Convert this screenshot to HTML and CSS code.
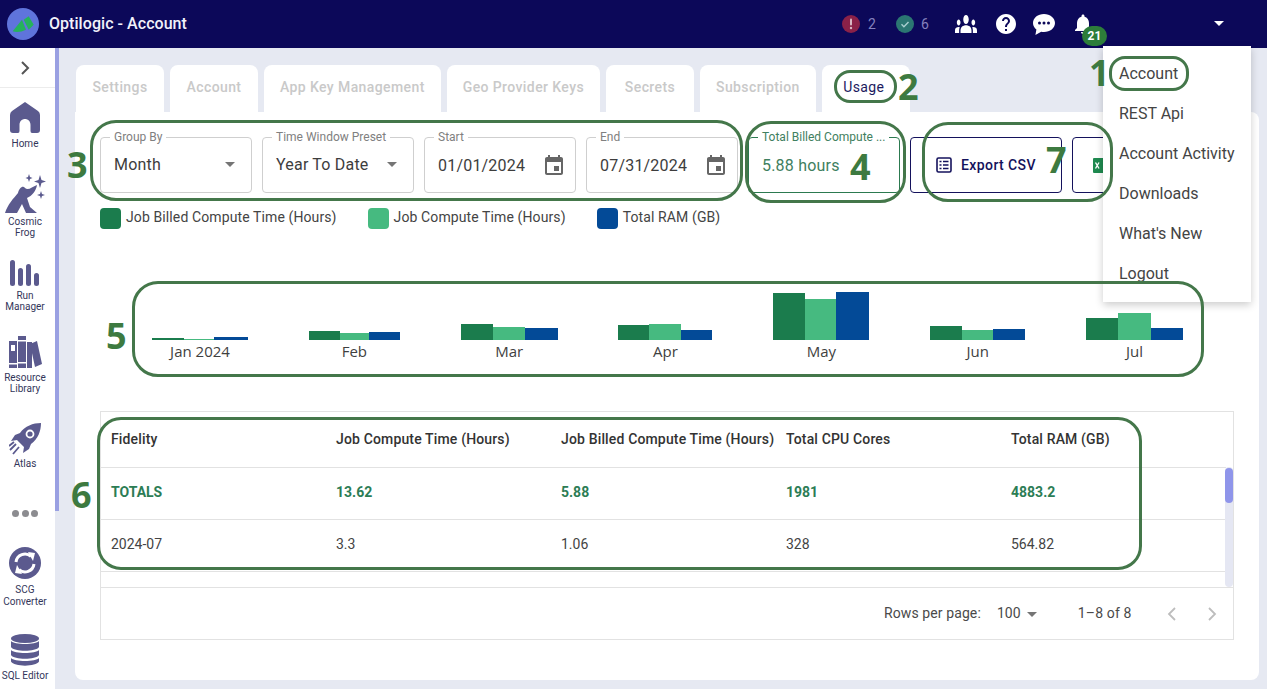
FILE: index.html
```html
<!DOCTYPE html>
<html lang="en">
<head>
<meta charset="utf-8">
<title>Optilogic - Account</title>
<link rel="stylesheet" href="styles.css">
</head>
<body>
<div class="app">
  <header class="topbar">
    <svg class="logo" viewBox="0 0 32 32"><circle cx="16" cy="16" r="16" fill="#5f74dc"/><path d="M5.700 23.300 L15 11.700 L19 21.700 Q12 25 5.700 23.300 Z" fill="#25b35c"/><path d="M16.700 11.700 L21.700 8.300 L26.700 16.700 L21.700 21.700 Z" fill="#25b35c"/></svg>
    <h1 class="title">Optilogic - Account</h1>
    <div class="top-icons">
      <span class="stat"><svg class="stat-icon" viewBox="0 0 18 18"><circle cx="9" cy="9" r="9" fill="#8a2148"/><rect x="8" y="3.5" width="2" height="7" rx="1" fill="#d8b8c4"/><circle cx="9" cy="13" r="1.2" fill="#d8b8c4"/></svg><span>2</span></span>
      <span class="stat stat-ok"><svg class="stat-icon" viewBox="0 0 18 18"><circle cx="9" cy="9" r="9" fill="#2b7672"/><path d="M5.5 9.3l2.4 2.4 4.6-4.8" fill="none" stroke="#a9cfd0" stroke-width="1.4"/></svg><span>6</span></span>
      <svg class="ti ti-people" viewBox="0 6 24 12" preserveAspectRatio="none"><path fill="#fff" d="M12 12.75c1.63 0 3.07.39 4.24.9 1.08.48 1.76 1.56 1.76 2.73V18H6v-1.61c0-1.18.68-2.26 1.76-2.73 1.17-.52 2.61-.91 4.24-.91zM4 13c1.1 0 2-.9 2-2s-.9-2-2-2-2 .9-2 2 .9 2 2 2zm1.13 1.1C4.76 14.04 4.39 14 4 14c-.99 0-1.93.21-2.78.58C.48 14.9 0 15.62 0 16.43V18h4.5v-1.61c0-.83.23-1.61.63-2.29zM20 13c1.1 0 2-.9 2-2s-.9-2-2-2-2 .9-2 2 .9 2 2 2zm4 3.43c0-.81-.48-1.53-1.22-1.85C21.93 14.21 20.99 14 20 14c-.39 0-.76.04-1.13.1.4.68.63 1.46.63 2.29V18H24v-1.57zM12 6c1.66 0 3 1.34 3 3s-1.34 3-3 3-3-1.34-3-3 1.34-3 3-3z"/></svg>
      <svg class="ti ti-help" viewBox="2 2 20 20"><path fill="#fff" d="M12 2C6.48 2 2 6.48 2 12s4.48 10 10 10 10-4.48 10-10S17.52 2 12 2zm1 17h-2v-2h2v2zm2.07-7.75l-.9.92C13.45 12.9 13 13.5 13 15h-2v-.5c0-1.1.45-2.1 1.17-2.83l1.24-1.26c.37-.36.59-.86.59-1.41 0-1.1-.9-2-2-2s-2 .9-2 2H8c0-2.21 1.79-4 4-4s4 1.79 4 4c0 .88-.36 1.68-.93 2.25z"/></svg>
      <svg class="ti ti-chat" viewBox="0 0 24 24"><path fill="#fff" d="M12 2C5.9 2 1 5.9 1 11c0 2.600 1.300 4.900 3.400 6.500L3.400 23l5.800-3.300c.9.2 1.800.3 2.800.3 6.100 0 11-4 11-9S18.100 2 12 2z"/><circle cx="7.500" cy="11" r="1.500" fill="#0c0859"/><circle cx="12" cy="11" r="1.500" fill="#0c0859"/><circle cx="16.500" cy="11" r="1.500" fill="#0c0859"/></svg>
      <span class="bell">
        <svg class="ti-bell" viewBox="0 0 24 24"><path fill="#fff" d="M12 22c1.100 0 2-.9 2-2h-4c0 1.100.89 2 2 2zm6-6v-5c0-3.070-1.640-5.640-4.500-6.320V4c0-.83-.67-1.500-1.500-1.500s-1.500.67-1.500 1.500v.68C7.630 5.360 6 7.920 6 11v5l-2 2v1h16v-1l-2-2z"/></svg>
        <span class="badge">21</span>
      </span>
    </div>
    <span class="top-caret"></span>
  </header>

  <div class="body">
    <nav class="sidebar">
      <div class="side-toggle"><svg class="chev" viewBox="0 0 10 16"><path d="M2 2l6 6-6 6" fill="none" stroke="#555" stroke-width="2"/></svg></div>
      <a class="side-item si-home">
        <svg class="i-home" viewBox="0 0 30 32"><path fill="#5b5a8e" d="M15 0 L28 9 Q30 10.500 30 13 V28 Q30 31 27 31 H22 Q20.500 31 20.500 29 V23 C20.500 15 9.500 15 9.500 23 V29 Q9.500 31 8 31 H3 Q0 31 0 28 V13 Q0 10.500 2 9 Z"/></svg>
        <span>Home</span>
      </a>
      <a class="side-item si-frog">
        <svg class="i-frog" viewBox="0 0 42 42"><path fill="#5b5a8e" d="M1 40 C4 31 9 26 14 20 C15 15 19 12 21 15 C24 18 28 14 33 12 C32 18 28 23 23 25 L26 34 L33 40 L22 40 L18 31 L13 40 Z"/><path fill="#5b5a8e" d="M36 2 L37.500 7 L42 8.500 L37.500 10 L36 15 L34.500 10 L30 8.500 L34.500 7 Z M25 1 L26 4 L28.500 5 L26 6 L25 9 L24 6 L21.500 5 L24 4 Z M37 18 L38 21 L41 22 L38 23 L37 26 L36 23 L33 22 L36 21 Z"/></svg>
        <span>Cosmic<br>Frog</span>
      </a>
      <a class="side-item si-run">
        <svg class="i-run" viewBox="0 0 29 26"><g fill="#5b5a8e"><rect x="0" y="0" width="5" height="26" rx="2.500"/><rect x="8" y="8" width="5" height="18" rx="2.500"/><rect x="16" y="4" width="5" height="22" rx="2.500"/><rect x="24" y="13" width="5" height="13" rx="2.500"/></g></svg>
        <span>Run<br>Manager</span>
      </a>
      <a class="side-item si-lib">
        <svg class="i-lib" viewBox="0 0 33 33"><g fill="#5b5a8e"><rect x="0" y="5" width="8" height="27"/><rect x="9" y="0" width="8" height="32"/><rect x="18" y="6" width="5" height="26"/><path d="M21 8 L28 5 L33 28 L26 31 Z"/></g><g fill="#fff"><rect x="2" y="9" width="4" height="6"/><rect x="9" y="4" width="8" height="1.500"/><rect x="9" y="26" width="8" height="1.500"/><rect x="0" y="27" width="8" height="1.500"/></g></svg>
        <span>Resource<br>Library</span>
      </a>
      <a class="side-item si-atlas">
        <svg class="i-atlas" viewBox="0 0 32 33"><path fill="#5b5a8e" d="M32 0 C24 0 16 3 11 10 L6 12 L2 18 L8 17 L15 24 L14 30 L20 26 L22 21 C29 16 32 8 32 0Z"/><circle cx="21" cy="11" r="3.500" fill="none" stroke="#fff" stroke-width="1.800"/><path d="M7 21 L1 27 M10 24 L4 31 M5 19 L0 23" stroke="#5b5a8e" stroke-width="1.800" fill="none"/></svg>
        <span>Atlas</span>
      </a>
      <div class="side-dots"><i></i><i></i><i></i></div>
      <a class="side-item si-scg">
        <svg class="i-scg" viewBox="0 0 32 32"><circle cx="16" cy="16" r="16" fill="#5b5a8e"/><path d="M7 15 A9 9 0 0 1 22 9.500" fill="none" stroke="#fff" stroke-width="3"/><path d="M19 5 L26 6 L24 14 Z" fill="#fff"/><path d="M25 17 A9 9 0 0 1 10 22.500" fill="none" stroke="#fff" stroke-width="3"/><path d="M13 27 L6 26 L8 18 Z" fill="#fff"/></svg>
        <span>SCG<br>Converter</span>
      </a>
      <a class="side-item si-sql">
        <svg class="i-sql" viewBox="0 0 28 32"><g fill="#5b5a8e"><ellipse cx="14" cy="4.500" rx="14" ry="4.500"/><path d="M0 7 C3 11 25 11 28 7 V13 C25 18 3 18 0 13 Z"/><path d="M0 16 C3 20 25 20 28 16 V21 C25 26 3 26 0 21 Z"/><path d="M0 24 C3 28 25 28 28 24 V27.500 C25 33 3 33 0 27.500 Z"/></g></svg>
        <span>SQL Editor</span>
      </a>
    </nav>
    <div class="strip"><div class="strip-thumb"></div></div>

    <main class="main">
      <div class="tabs">
        <a class="tab">Settings</a>
        <a class="tab">Account</a>
        <a class="tab">App Key Management</a>
        <a class="tab">Geo Provider Keys</a>
        <a class="tab">Secrets</a>
        <a class="tab">Subscription</a>
        <a class="tab tab-active">Usage</a>
      </div>
      <section class="card">
        <div class="controls">
          <div class="field"><label class="field-label">Group By</label><span class="field-value field-select">Month</span><span class="caret"></span></div>
          <div class="field"><label class="field-label">Time Window Preset</label><span class="field-value field-select">Year To Date</span><span class="caret"></span></div>
          <div class="field"><label class="field-label">Start</label><span class="field-value">01/01/2024</span><svg class="cal" viewBox="3 1 18 20"><path fill="#666" d="M17 12h-5v5h5v-5zM16 1v2H8V1H6v2H5c-1.110 0-1.990.9-1.990 2L3 19c0 1.100.89 2 2 2h14c1.100 0 2-.9 2-2V5c0-1.100-.9-2-2-2h-1V1h-2zm3 18H5V8h14v11z"/></svg></div>
          <div class="field"><label class="field-label">End</label><span class="field-value">07/31/2024</span><svg class="cal" viewBox="3 1 18 20"><path fill="#666" d="M17 12h-5v5h5v-5zM16 1v2H8V1H6v2H5c-1.110 0-1.990.9-1.990 2L3 19c0 1.100.89 2 2 2h14c1.100 0 2-.9 2-2V5c0-1.100-.9-2-2-2h-1V1h-2zm3 18H5V8h14v11z"/></svg></div>
          <div class="field field-green"><label class="field-label">Total Billed Compute ...</label><span class="field-value">5.88 hours</span></div>
          <button class="btn"><svg class="btn-icon" viewBox="0 0 16 16"><rect x="1" y="1" width="14" height="14" rx="1.500" fill="none" stroke="#14125c" stroke-width="1.600"/><path d="M3.500 4.500h2M7 4.500h5.500M3.500 8h2M7 8h5.500M3.500 11.500h2M7 11.500h5.500" stroke="#14125c" stroke-width="1.500"/></svg>Export CSV</button>
          <button class="btn btn-xl" aria-label="Export Excel"><svg class="xl-icon" viewBox="0 0 16 15"><rect x="0" y="0" width="16" height="15" rx="1" fill="#1f8a50"/><path d="M2.500 4.500l3.500 6M6 4.500l-3.500 6" stroke="#fff" stroke-width="1.400"/></svg></button>
        </div>
        <div class="legend">
          <span class="legend-item"><i class="sw sw-a"></i>Job Billed Compute Time (Hours)</span>
          <span class="legend-item"><i class="sw sw-b"></i>Job Compute Time (Hours)</span>
          <span class="legend-item"><i class="sw sw-c"></i>Total RAM (GB)</span>
        </div>
        <div class="chart">
          <div class="group"><div class="bars"><i class="bar sw-a" style="height:2px;width:32px"></i><i class="bar sw-b" style="height:1px;width:30px"></i><i class="bar sw-c" style="height:3px;width:34px"></i></div><span>Jan 2024</span></div>
          <div class="group"><div class="bars"><i class="bar sw-a" style="height:9px;width:31px"></i><i class="bar sw-b" style="height:7px;width:29px"></i><i class="bar sw-c" style="height:8px;width:31px"></i></div><span>Feb</span></div>
          <div class="group"><div class="bars"><i class="bar sw-a" style="height:16px;width:32px"></i><i class="bar sw-b" style="height:13px;width:32px"></i><i class="bar sw-c" style="height:12px;width:33px"></i></div><span>Mar</span></div>
          <div class="group"><div class="bars"><i class="bar sw-a" style="height:15px;width:31px"></i><i class="bar sw-b" style="height:16px;width:32px"></i><i class="bar sw-c" style="height:10px;width:31px"></i></div><span>Apr</span></div>
          <div class="group"><div class="bars"><i class="bar sw-a" style="height:47px;width:32px"></i><i class="bar sw-b" style="height:41px;width:31px"></i><i class="bar sw-c" style="height:48px;width:33px"></i></div><span>May</span></div>
          <div class="group"><div class="bars"><i class="bar sw-a" style="height:14px;width:32px"></i><i class="bar sw-b" style="height:10px;width:31px"></i><i class="bar sw-c" style="height:11px;width:32px"></i></div><span>Jun</span></div>
          <div class="group"><div class="bars"><i class="bar sw-a" style="height:22px;width:32px"></i><i class="bar sw-b" style="height:27px;width:33px"></i><i class="bar sw-c" style="height:12px;width:32px"></i></div><span>Jul</span></div>
        </div>
        <div class="table-box">
          <div class="table-scroll">
            <table class="data">
              <thead><tr><th>Fidelity</th><th>Job Compute Time (Hours)</th><th>Job Billed Compute Time (Hours)</th><th>Total CPU Cores</th><th>Total RAM (GB)</th></tr></thead>
              <tbody>
                <tr class="totals"><td>TOTALS</td><td>13.62</td><td>5.88</td><td>1981</td><td>4883.2</td></tr>
                <tr><td>2024-07</td><td>3.3</td><td>1.06</td><td>328</td><td>564.82</td></tr>
              </tbody>
            </table>
            <div class="vscroll"><div class="vthumb"></div></div>
          </div>
          <div class="pager">
            <span class="pager-label">Rows per page:</span>
            <span class="pager-size">100</span><span class="caret caret-pager"></span>
            <span class="pager-range">1–8 of 8</span>
            <svg class="pager-chev" viewBox="0 0 10 16"><path d="M8 2L2 8l6 6" fill="none" stroke="#bdbdbd" stroke-width="1.800"/></svg>
            <svg class="pager-chev pager-next" viewBox="0 0 10 16"><path d="M2 2l6 6-6 6" fill="none" stroke="#bdbdbd" stroke-width="1.800"/></svg>
          </div>
        </div>
      </section>
    </main>
  </div>

  <div class="menu">
    <a>Account</a><a>REST Api</a><a>Account Activity</a><a>Downloads</a><a>What's New</a><a>Logout</a>
  </div>

  <div class="ring r1"></div><div class="ring r2"></div><div class="ring r3"></div><div class="ring r4"></div>
  <div class="ring r5"></div><div class="ring r6"></div><div class="ring r7"></div>
  <span class="num n1">1</span><span class="num n2">2</span><span class="num n3">3</span><span class="num n4">4</span>
  <span class="num n5">5</span><span class="num n6">6</span><span class="num n7">7</span>
</div>
</body>
</html>
```
FILE: styles.css
```css
* { box-sizing: border-box; }
html, body { margin: 0; padding: 0; height: 100%; overflow: hidden; }
body { font-family: Roboto, "Liberation Sans", sans-serif; color: #3a3a3a; background: #e6e9f2; }
.app { position: relative; width: 1267px; height: 689px; overflow: hidden; display: flex; flex-direction: column; }

/* top bar */
.topbar { height: 48px; flex: none; background: #0c0859; display: flex; align-items: center; padding-left: 7px; color: #fff; }
.logo { width: 32px; height: 32px; flex: none; }
.title { font-size: 16px; font-weight: 500; margin: 0 0 2px 10px; letter-spacing: .05px; color: #f2f2fa; }
.top-icons { position: absolute; left: 842px; top: 0; height: 48px; display: flex; align-items: center; }
.stat { display: flex; align-items: center; gap: 8px; font-size: 14px; color: #8481bd; width: 54px; }
.stat-ok { width: 61px; gap: 7px; }
.stat-icon { width: 18px; height: 18px; }
.ti { display: block; }
.ti-people { width: 22px; height: 18px; margin-left: -2px; }
.ti-help { width: 20px; height: 20px; margin-left: 19px; }
.ti-chat { width: 24px; height: 24px; margin-left: 16px; }
.bell { position: relative; margin-left: 15px; width: 24px; height: 24px; }
.ti-bell { width: 24px; height: 24px; display: block; }
.badge { position: absolute; left: 11px; top: 14px; width: 25px; height: 20px; border-radius: 10px; background: #2d7d3a; color: #fff; font-size: 12px; font-weight: 700; line-height: 20px; text-align: center; }
.top-caret { position: absolute; left: 1214px; top: 21px; border-left: 5px solid transparent; border-right: 5px solid transparent; border-top: 5px solid #fff; }

/* body */
.body { flex: 1; display: flex; min-height: 0; }
.sidebar { width: 55px; flex: none; background: #fff; display: flex; flex-direction: column; align-items: center; overflow: hidden; padding-right: 5px; }
.side-toggle { width: 55px; margin-right: -5px; height: 40px; flex: none; border-bottom: 1px solid #ececec; display: flex; align-items: center; padding-left: 20px; }
.chev { width: 10px; height: 16px; }
.side-item { display: flex; flex-direction: column; align-items: center; flex: none; font-size: 10px; line-height: 11.5px; color: #33365a; text-align: center; white-space: nowrap; }
.side-item span { display: block; }
.si-home { margin-top: 14px; } .i-home { width: 30px; height: 32px; margin-bottom: 4px; }
.si-frog { margin-top: 23px; } .i-frog { width: 42px; height: 42px; margin-bottom: 1px; }
.si-run { margin-top: 21px; } .i-run { width: 29px; height: 26px; margin-bottom: 4px; }
.si-lib { margin-top: 23px; } .i-lib { width: 33px; height: 33px; margin-bottom: 3px; }
.si-atlas { margin-top: 28px; } .i-atlas { width: 32px; height: 33px; margin-bottom: 2px; }
.side-dots { margin-top: 41px; display: flex; gap: 2.500px; flex: none; }
.side-dots i { width: 7px; height: 7px; border-radius: 50%; background: #8c8c90; }
.si-scg { margin-top: 30px; } .i-scg { width: 32px; height: 32px; margin-bottom: 5px; }
.si-sql { margin-top: 27px; } .i-sql { width: 28px; height: 32px; margin-bottom: 4px; }
.strip { width: 4px; flex: none; background: #e6e9f2; }
.strip-thumb { height: 463px; background: #9aa0e2; }

/* main */
.main { flex: 1; min-width: 0; padding: 17px 8px 9px 16px; display: flex; flex-direction: column; }
.tabs { display: flex; gap: 6px; height: 47px; flex: none; padding-left: 1px; }
.tab { background: #fff; border-radius: 8px 8px 0 0; min-width: 88px; padding: 0 16px 4px; font-size: 14px; font-weight: 500; letter-spacing: .4px; color: #c9c9c9; display: flex; align-items: center; justify-content: center; white-space: nowrap; }
.tab-active { color: #1c1a5e; font-weight: 400; padding-right: 18px; padding-left: 14px; }
.card { flex: 1; background: #fff; border-radius: 0 8px 8px 8px; padding: 25px 25px 0; min-height: 0; }
.controls { display: flex; gap: 10px; height: 56px; }
.field { position: relative; width: 152px; height: 56px; border: 1px solid #cfcfcf; border-radius: 4px; display: flex; align-items: center; padding: 0 13px; flex: none; }
.field-label { position: absolute; left: 9px; top: -7px; background: #fff; padding: 0 4px; font-size: 12px; line-height: 13px; color: #808080; white-space: nowrap; }
.field-value { font-size: 16px; color: #3d3d3d; letter-spacing: .2px; }
.field-select { margin-bottom: 2px; }
.caret { position: absolute; right: 16px; top: 24px; border-left: 5px solid transparent; border-right: 5px solid transparent; border-top: 5px solid #757575; }
.cal { position: absolute; right: 12px; top: 17px; width: 18px; height: 20px; }
.field-green { border-color: #2c7a50; }
.field-green .field-label { color: #3f8060; }
.field-green .field-value { color: #3f8060; }
.btn { width: 152px; height: 56px; flex: none; background: #fff; border: 1px solid #14125c; border-radius: 4px; font-family: inherit; font-size: 14px; font-weight: 500; letter-spacing: .4px; color: #14125c; display: flex; align-items: center; justify-content: center; gap: 9px; padding: 0; }
.btn-xl { justify-content: flex-start; padding-left: 20px; }
.btn-icon { width: 16px; height: 16px; flex: none; }
.xl-icon { width: 16px; height: 15px; flex: none; }
.legend { display: flex; gap: 31px; margin-top: 15px; height: 21px; }
.legend-item { display: flex; align-items: flex-start; gap: 5px; font-size: 14px; line-height: 18px; color: #444; letter-spacing: .11px; }
.sw { display: block; width: 21px; height: 21px; border-radius: 4px; }
.sw-a { background: #1b7c4d; }
.sw-b { background: #46ba80; }
.sw-c { background: #034a97; }
.chart { display: flex; justify-content: space-between; margin: 63px 51px 0 52px; height: 70px; }
.group { display: flex; flex-direction: column; align-items: center; }
.bars { height: 50px; display: flex; align-items: flex-end; }
.bar { display: block; border-radius: 0; }
.group span { font-family: "Open Sans", "Liberation Sans", sans-serif; font-size: 15px; line-height: 22px; color: #3f3f3f; }

/* table */
.table-box { margin-top: 49px; width: 1134px; height: 229px; border: 1px solid #e2e2e2; display: flex; flex-direction: column; }
.table-scroll { position: relative; height: 176px; flex: none; border-bottom: 1px solid #e2e2e2; overflow: hidden; }
.data { border-collapse: collapse; table-layout: fixed; width: 1125px; font-size: 14px; }
.data th, .data td { text-align: left; padding: 0 0 0 10px; color: #444; border-bottom: 1px solid #e2e2e2; white-space: nowrap; }
.data th { height: 55px; font-weight: 500; color: #333; vertical-align: top; padding-top: 19px; letter-spacing: .15px; }
.data td { height: 52px; padding-bottom: 2px; }
.totals td { color: #2c7d55; font-weight: 700; }
.vscroll { position: absolute; right: 0; top: 55px; width: 8px; bottom: 0; background: #e5e7f3; border-radius: 4px; }
.vthumb { height: 35px; background: #8f95ea; border-radius: 4px; margin-top: 1px; }
.pager { flex: 1; display: flex; align-items: center; font-size: 14px; color: #4a4a4a; padding: 0 0 2px 783px; }
.pager-label { letter-spacing: .1px; }
.pager-size { margin-left: 16px; letter-spacing: .1px; }
.caret-pager { position: static; margin-left: 6px; margin-top: 3px; }
.pager-range { margin-left: 41px; letter-spacing: .15px; }
.pager-chev { width: 10px; height: 16px; margin-left: 35px; margin-top: 3px; }
.pager-next { margin-left: 30px; }

/* account menu */
.menu { position: absolute; left: 1103px; top: 46px; width: 148px; height: 256px; background: #fff; box-shadow: 0 3px 8px rgba(0,0,0,.2); padding-top: 7px; display: flex; flex-direction: column; }
.menu a { height: 40px; flex: none; display: flex; align-items: center; padding-left: 16px; font-size: 16px; color: #444; white-space: nowrap; }

/* annotation overlays */
.ring { position: absolute; border: 3px solid #44774a; pointer-events: none; }
.r1 { left: 1109px; top: 56px; width: 80px; height: 35px; border-radius: 16px; }
.r2 { left: 834px; top: 70px; width: 63px; height: 33px; border-radius: 16px; }
.r3 { left: 90px; top: 120px; width: 653px; height: 81px; border-radius: 26px; }
.r4 { left: 745px; top: 121px; width: 161px; height: 82px; border-radius: 26px; }
.r5 { left: 132px; top: 281px; width: 1072px; height: 96px; border-radius: 26px; }
.r6 { left: 97px; top: 417px; width: 1045px; height: 153px; border-radius: 24px; }
.r7 { left: 922px; top: 122px; width: 191px; height: 80px; border-radius: 26px; }
.num { position: absolute; font-family: "Open Sans", "Liberation Sans", sans-serif; font-weight: 700; font-size: 36px; line-height: 40px; color: #3d7a40; }
.n1 { left: 1089px; top: 53px; }
.n2 { left: 898px; top: 67px; }
.n3 { left: 67px; top: 145px; }
.n4 { left: 850px; top: 147px; }
.n5 { left: 106px; top: 316px; }
.n6 { left: 71px; top: 475px; }
.n7 { left: 1046px; top: 140px; }
```
